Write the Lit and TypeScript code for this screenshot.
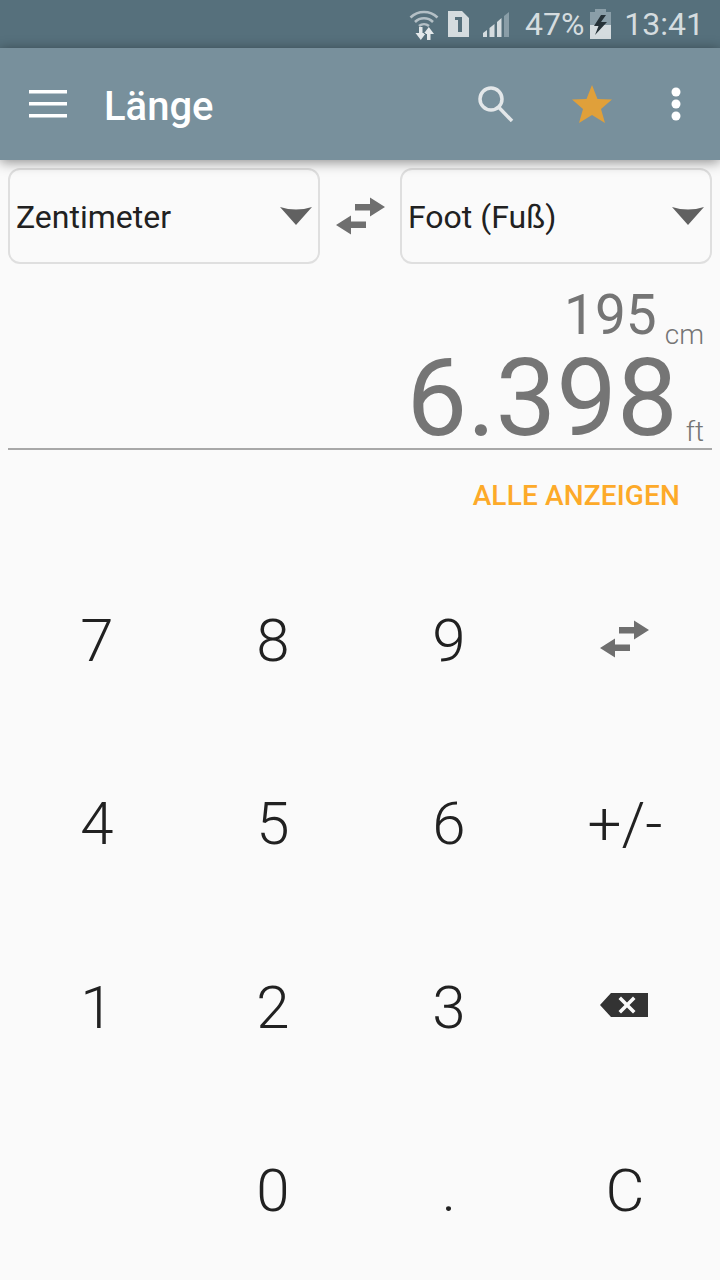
import { LitElement, html, css, svg } from "lit";
import { customElement } from "lit/decorators.js";

const swap = svg`<svg class="swap" width="50" height="40" viewBox="0 0 50 40"><path fill="#6f6f6f" d="M34 1.500 L49 11 L34 20.500 V14.500 H19 V8 H34 Z M15 19.500 V25.500 H30 V32 H15 V38.500 L0 29 Z"/></svg>`;

@customElement("app-root")
export class AppRoot extends LitElement {
  static styles = css`
    :host { display: block; width: 720px; height: 1280px; overflow: hidden; background: #fafafa; font-family: Roboto, "Liberation Sans", sans-serif; color: #212121; }
    .status { height: 48px; background: #56707c; display: flex; align-items: center; justify-content: flex-end; padding-right: 16px; color: #d5dcdf; font-size: 32px; box-sizing: border-box; }
    .status svg { display: block; }
    .wifi { margin-right: 9px; }
    .sim { margin-right: 14px; }
    .sig { margin-right: 16px; }
    .pct { margin-right: 6px; }
    .batt { margin-right: 13px; }
    .bar { height: 112px; background: #78909c; display: flex; align-items: center; box-shadow: 0 2px 12px rgba(0,0,0,.45); position: relative; z-index: 1; }
    .menu { margin-left: 29px; display: block; }
    .title { margin-left: 37px; color: #fff; font-size: 40px; font-weight: 500; flex: 1; line-height: 48px; padding-top: 6px; }
    .search { margin-right: 58px; }
    .star { margin-right: 59px; }
    .dots { margin-right: 39px; }
    .selects { display: flex; align-items: center; padding: 8px 8px 0; height: 96px; }
    .sel { width: 312px; height: 96px; box-sizing: border-box; border: 2px solid #dfdfdf; border-radius: 12px; display: flex; align-items: center; justify-content: space-between; padding: 2px 6px 0 6px; font-size: 32px; color: #212121; }
    .sel svg { margin-bottom: 2px; }
    .mid { flex: 1; display: flex; justify-content: center; padding-left: 1px; }
    .display { margin: 0 8px; height: 186px; box-sizing: border-box; border-bottom: 2px solid #a8a8a8; padding-right: 8px; color: #757575; text-align: right; }
    .l1 { height: 56px; padding-top: 18px; font-size: 55px; line-height: 66px; }
    .l2 { font-size: 108px; line-height: 104px; margin-top: 8px; }
    .u1 { font-size: 28px; font-weight: 300; margin-left: 8px; vertical-align: -10px; }
    .u2 { font-size: 28px; font-weight: 300; margin-left: 8px; vertical-align: -6px; }
    .all { text-align: right; padding: 28px 40px 0 0; height: 99px; box-sizing: border-box; font-size: 28px; font-weight: 500; letter-spacing: .15px; color: #fdaa29; line-height: 36px; }
    .keys { margin: 0 8px 0 9px; display: grid; grid-template-columns: repeat(4, 176px); grid-auto-rows: 183.33px; }
    .key { display: flex; align-items: center; justify-content: center; font-size: 60px; font-weight: 300; color: #212121; }
    .key .swap { margin-bottom: 4px; }
    .back { margin: 0 2px 4px 0; }
  `;

  render() {
    const caret = html`<svg width="32" height="20" viewBox="0 0 32 20"><path fill="#616161" d="M0 1 Q16 6 32 1 L16 19 Z"/></svg>`;
    return html`
      <div class="status">
        <svg class="wifi" width="30" height="32" viewBox="0 0 30 32" fill="none" stroke="#b4c0c6" stroke-width="2.500">
          <path d="M1.500 9.500 C9 2 21 2 28.500 9.500"/><path d="M6 14 C11 9 19 9 24 14"/><path d="M10 18 C13 15.500 17 15.500 20 18"/>
          <path fill="#e4e9eb" stroke="none" d="M10 19 H13.500 V25 H17 L11.800 32 L6.500 25 H10 Z M18 32 H21.500 V26 H25 L19.800 19 L14.500 26 H18 Z"/>
        </svg>
        <svg class="sim" width="21" height="26" viewBox="0 0 21 26"><path fill-rule="evenodd" fill="#d5dcdf" d="M0 0 H14 L21 7 V26 H0 Z M7 6 V9 H10 V21 H14 V6 Z"/></svg>
        <svg class="sig" width="26" height="25" viewBox="0 0 26 25"><path fill="#d5dcdf" d="M0 25 V21 L4 18 V25 Z M6.500 25 V16 L11.500 12 V25 Z M14 25 V10 L18.500 6 V25 Z"/><path fill="#8a9ea8" d="M21 25 V4 L26 0 V25 Z"/></svg>
        <span class="pct">47%</span>
        <svg class="batt" width="21" height="30" viewBox="0 0 21 30"><path fill="#8a9ea8" d="M5 0 H16 V3 H21 V30 H0 V3 H5 Z"/><path fill="#d5dcdf" d="M0 16 H21 V30 H0 Z"/><path fill="#263238" d="M11 6 L4 17 H8.500 L5 26 L17 13 H11 L16 6 Z"/></svg>
        <span>13:41</span>
      </div>
      <div class="bar">
        <svg class="menu" width="38" height="28" viewBox="0 0 38 28"><path fill="#fff" d="M0 0 H38 V3.500 H0 Z M0 12 H38 V15.500 H0 Z M0 24 H38 V27.500 H0 Z"/></svg>
        <div class="title">Länge</div>
        <svg class="search" width="36" height="36" viewBox="0 0 36 36" fill="none" stroke="#e3e7e9" stroke-width="3.500"><circle cx="13" cy="13" r="11"/><path d="M20.500 21 L34 35"/></svg>
        <svg class="star" width="40" height="38" viewBox="0 0 40 38"><path fill="#e0a03a" d="M20 0 L25.500 14 L40 14.500 L29 24 L33 38 L20 30 L7 38 L11 24 L0 14.500 L14.500 14 Z"/></svg>
        <svg class="dots" width="10" height="34" viewBox="0 0 10 34"><g fill="#fff"><circle cx="5" cy="5" r="4.500"/><circle cx="5" cy="17" r="4.500"/><circle cx="5" cy="29" r="4.500"/></g></svg>
      </div>
      <div class="selects">
        <div class="sel"><span>Zentimeter</span>${caret}</div>
        <div class="mid">${swap}</div>
        <div class="sel"><span>Foot (Fuß)</span>${caret}</div>
      </div>
      <div class="display">
        <div class="l1"><span>195</span><span class="u1">cm</span></div>
        <div class="l2"><span>6.398</span><span class="u2">ft</span></div>
      </div>
      <div class="all">ALLE ANZEIGEN</div>
      <div class="keys">
        <div class="key">7</div><div class="key">8</div><div class="key">9</div><div class="key">${swap}</div>
        <div class="key">4</div><div class="key">5</div><div class="key">6</div><div class="key">+/-</div>
        <div class="key">1</div><div class="key">2</div><div class="key">3</div>
        <div class="key"><svg class="back" width="48" height="24" viewBox="0 0 48 24"><path fill-rule="evenodd" fill="#333" d="M11 0 H48 V24 H11 L0 12 Z M21 3.500 L18.500 6 L24.500 12 L18.500 18 L21 20.500 L27 14.500 L33 20.500 L35.500 18 L29.500 12 L35.500 6 L33 3.500 L27 9.500 Z"/></svg></div>
        <div class="key"></div><div class="key">0</div><div class="key">.</div><div class="key">C</div>
      </div>
    `;
  }
}
